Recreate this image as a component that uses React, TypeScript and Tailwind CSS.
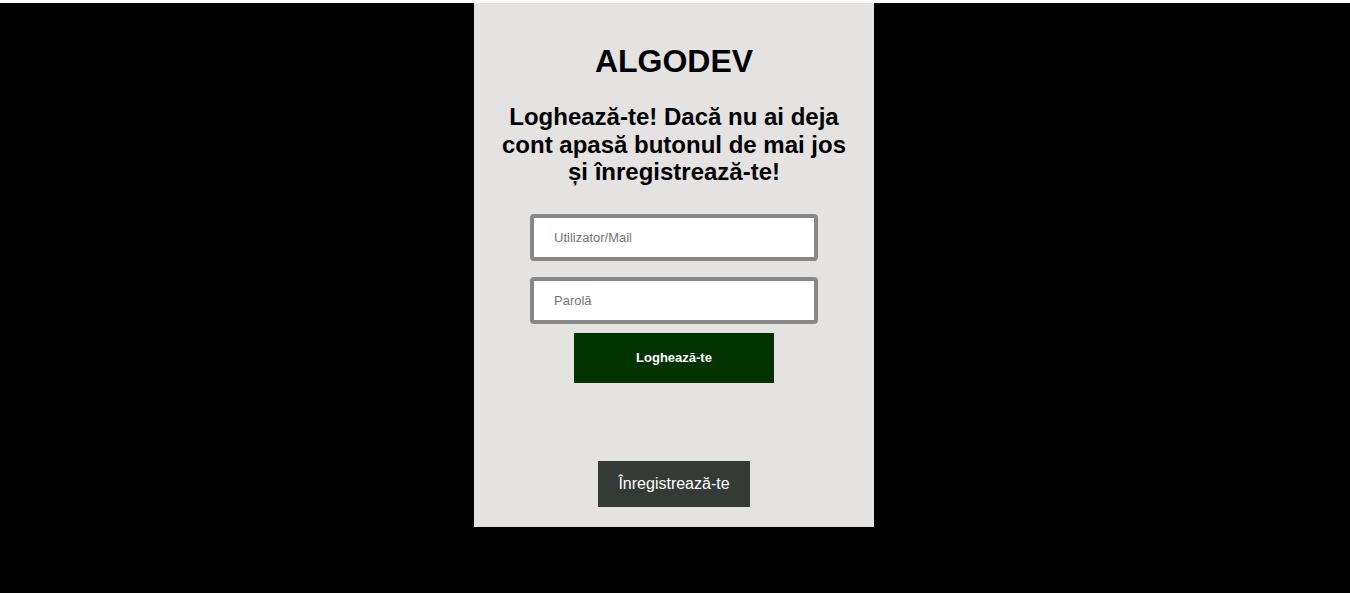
export default function App() {
  return (
    <div className="bg-white pt-[3px] font-['Liberation_Sans',Arial,sans-serif]">
      <div className="bg-black h-[590px] flex justify-center pr-[2px]">
        <div className="w-[400px] h-[524px] bg-[#e4e3e1] px-[25px] pt-[40px] flex flex-col items-center">
          <h1 className="text-[32px] font-bold text-black leading-[37px]">ALGODEV</h1>
          <h2 className="mt-[23px] text-[24px] font-bold text-black text-center leading-[27.6px]">
            Loghează-te! Dacă nu ai deja cont apasă butonul de mai jos și înregistrează-te!
          </h2>
          <form className="mt-[28px] flex flex-col items-center" onSubmit={(e) => e.preventDefault()}>
            <input
              type="text"
              placeholder="Utilizator/Mail"
              className="w-[288px] h-[47px] bg-white border-4 border-[#888888] rounded-[4px] pl-[20px] text-[13px] text-black placeholder:text-[#757575] outline-none"
            />
            <input
              type="password"
              placeholder="Parolă"
              className="mt-[16px] w-[288px] h-[47px] bg-white border-4 border-[#888888] rounded-[4px] pl-[20px] text-[13px] text-black placeholder:text-[#757575] outline-none"
            />
            <button
              type="submit"
              className="mt-[9px] w-[200px] h-[50px] bg-[#003300] text-white text-[13px] font-bold"
            >
              Loghează-te
            </button>
          </form>
          <button className="mt-[78px] w-[152px] h-[46px] bg-[#363a37] text-white text-[16px]">
            Înregistrează-te
          </button>
        </div>
      </div>
    </div>
  );
}
